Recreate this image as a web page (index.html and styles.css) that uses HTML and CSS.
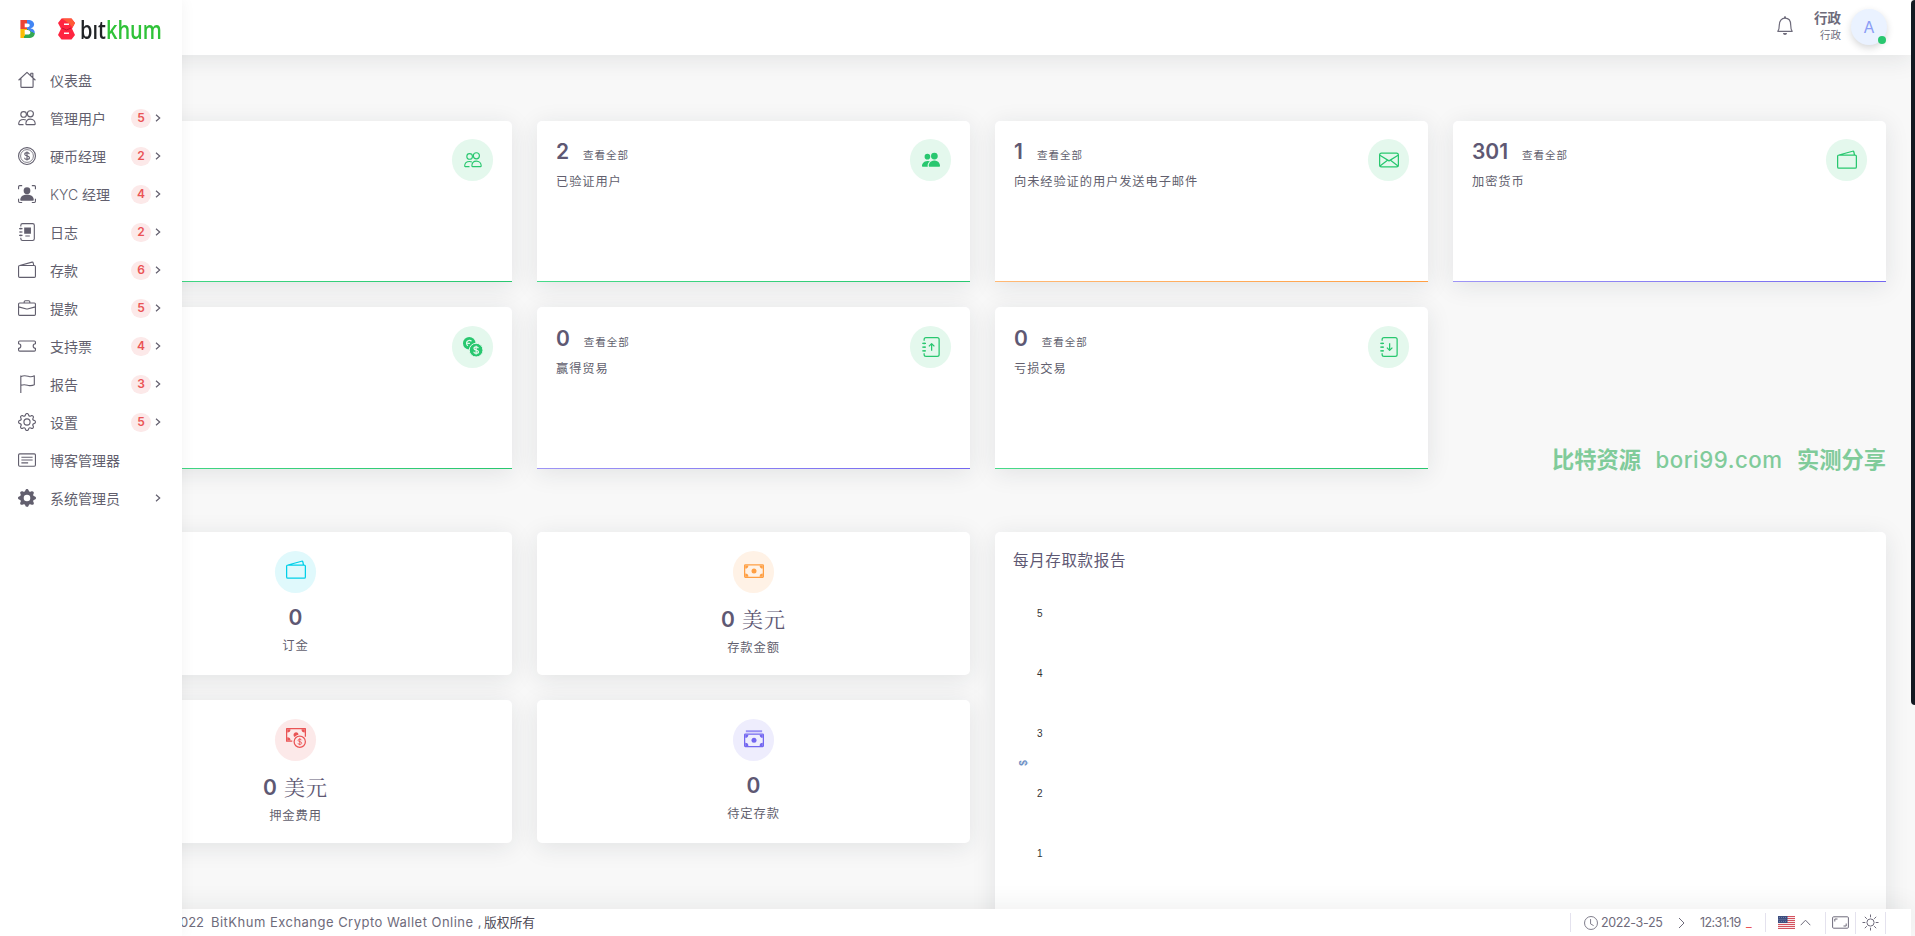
FILE: index.html
```
<!DOCTYPE html>
<html lang="zh-CN">
<head>
<meta charset="utf-8">
<title>BitKhum</title>
<link rel="stylesheet" href="styles.css">
</head>
<body>
<svg class="sprite" aria-hidden="true">
  <symbol id="house" viewBox="0 0 16 16"><path class="s" d="M.5 8.200 8 1.200l7.500 7M2.600 6.500v7.200c0 .6.300.9.900.9h9c.6 0 .9-.3.900-.9V6.500M11.400 4.200V2h1.800v4"/></symbol>
  <symbol id="people" viewBox="0 0 16 16"><circle class="s" cx="5" cy="4.800" r="2.500"/><circle class="s" cx="11" cy="4.300" r="2.700"/><path class="s" d="M7 13.400c0-2.600 1.600-4.400 4-4.400s4.300 1.800 4.300 4.400c0 .4-.2.500-.5.500H7.500c-.3 0-.5-.1-.5-.5zM4.900 13.900H1c-.3 0-.4-.2-.4-.5C.6 10.800 2.500 9.300 5 9.300c.8 0 1.400.1 2 .4"/></symbol>
  <symbol id="people-fill" viewBox="0 0 16 16"><circle cx="4.800" cy="5" r="2.500"/><circle cx="11" cy="4.500" r="3"/><path d="M7 14s-1 0-1-1 1-4.500 5-4.500 5 3.500 5 4.500-1 1-1 1zM5.200 14A2 2 0 0 1 5 13c0-1.400.7-2.900 2-3.900A6 6 0 0 0 5 8.800c-4 0-5 3.200-5 4.200s1 1 1 1z"/></symbol>
  <symbol id="coin" viewBox="0 0 16 16"><circle class="s" cx="8" cy="8" r="7.500"/><circle class="s thin" cx="8" cy="8" r="5.700"/><path class="s" d="M10.100 6.300C9.900 5.500 9.100 5 8 5s-2 .5-2 1.400C6 8.500 10.200 7.300 10.200 9.500c0 .9-.9 1.500-2.200 1.500s-2.100-.6-2.200-1.500M8 4v8"/></symbol>
  <symbol id="person-box" viewBox="0 0 16 16"><path class="s" d="M.5 3.700V1.500c0-.6.4-1 1-1h2.200M12.300.5h2.200c.6 0 1 .4 1 1v2.200M15.500 12.300v2.200c0 .6-.4 1-1 1h-2.200M3.700 15.500H1.500c-.6 0-1-.4-1-1v-2.200"/><circle cx="8" cy="5" r="3"/><path d="M3 14s-1 0-1-1 1-4.500 6-4.500 6 3.500 6 4.500-1 1-1 1z"/></symbol>
  <symbol id="journal" viewBox="0 0 16 16"><path class="s" d="M2.500 3V2c0-.9.6-1.500 1.500-1.500h9c.9 0 1.500.6 1.500 1.500v12c0 .9-.6 1.500-1.500 1.500H4c-.9 0-1.500-.6-1.500-1.500v-1M1 5h3M1 8h3M1 11h3M2.500 4.300v1.400M2.500 7.300v1.400M2.500 10.300v1.400"/></symbol>
  <symbol id="album" viewBox="0 0 16 16"><use href="#journal"/><path d="M5.500 4h6v5.500h-6zM6.500 11h4v1h-4z"/></symbol>
  <symbol id="journal-up" viewBox="0 0 16 16"><use href="#journal"/><path class="s" d="M8.500 11V5.300M6.300 7.500l2.200-2.200 2.200 2.200"/></symbol>
  <symbol id="journal-down" viewBox="0 0 16 16"><use href="#journal"/><path class="s" d="M8.500 5v5.700M6.300 8.500l2.200 2.200 2.200-2.200"/></symbol>
  <symbol id="wallet" viewBox="0 0 16 16"><path class="s" d="M1.500 4h13c.6 0 1 .4 1 1v8.500c0 .6-.4 1-1 1h-13c-.6 0-1-.4-1-1V5c0-.5.400-.9 1-1L12.500 1c.5-.1.900.2 1 .600L14 4"/></symbol>
  <symbol id="briefcase" viewBox="0 0 16 16"><path class="s" d="M1.500 3.500h13c.6 0 1 .4 1 1v9c0 .6-.4 1-1 1h-13c-.6 0-1-.4-1-1v-9c0-.6.400-1 1-1zM5.500 3.300V2.500c0-.6.400-1 1-1h3c.6 0 1 .400 1 1v.8M.5 7 7.600 8.900h.8L15.500 7"/></symbol>
  <symbol id="ticket" viewBox="0 0 16 16"><path class="s" d="M1.500 3.500h13c.6 0 1 .4 1 1V6a2 2 0 0 0 0 4v1.500c0 .6-.4 1-1 1h-13c-.6 0-1-.4-1-1V10a2 2 0 0 0 0-4V4.500c0-.6.400-1 1-1z"/></symbol>
  <symbol id="flag" viewBox="0 0 16 16"><path class="s" d="M2.500 16V.5M2.500 1.500C6-.3 8.500 1.200 10.500 1.500c1.500.2 2.800-.2 4-.8v8c-1.600.8-3 .9-4.500.7-2-.3-4-1.600-7.500-.2"/></symbol>
  <symbol id="gear" viewBox="0 0 16 16"><path d="M8 4.754a3.246 3.246 0 1 0 0 6.492 3.246 3.246 0 0 0 0-6.492zM5.754 8a2.246 2.246 0 1 1 4.492 0 2.246 2.246 0 0 1-4.492 0z"/><path d="M9.796 1.343c-.527-1.790-3.065-1.790-3.592 0l-.094.319a.873.873 0 0 1-1.255.52l-.292-.16c-1.640-.892-3.433.902-2.540 2.541l.159.292a.873.873 0 0 1-.52 1.255l-.319.094c-1.790.527-1.790 3.065 0 3.592l.319.094a.873.873 0 0 1 .52 1.255l-.16.292c-.892 1.640.901 3.434 2.541 2.540l.292-.159a.873.873 0 0 1 1.255.52l.094.319c.527 1.790 3.065 1.790 3.592 0l.094-.319a.873.873 0 0 1 1.255-.52l.292.16c1.640.893 3.434-.902 2.540-2.541l-.159-.292a.873.873 0 0 1 .52-1.255l.319-.094c1.790-.527 1.790-3.065 0-3.592l-.319-.094a.873.873 0 0 1-.52-1.255l.16-.292c.893-1.640-.902-3.433-2.541-2.540l-.292.159a.873.873 0 0 1-1.255-.52zm-2.633.283c.246-.835 1.428-.835 1.674 0l.094.319a1.873 1.873 0 0 0 2.693 1.115l.291-.16c.764-.415 1.600.42 1.184 1.185l-.159.292a1.873 1.873 0 0 0 1.116 2.692l.318.094c.835.246.835 1.428 0 1.674l-.319.094a1.873 1.873 0 0 0-1.115 2.693l.16.291c.415.764-.42 1.600-1.185 1.184l-.291-.159a1.873 1.873 0 0 0-2.693 1.116l-.094.318c-.246.835-1.428.835-1.674 0l-.094-.319a1.873 1.873 0 0 0-2.692-1.115l-.292.16c-.764.415-1.600-.42-1.184-1.185l.159-.291A1.873 1.873 0 0 0 1.945 8.930l-.319-.094c-.835-.246-.835-1.428 0-1.674l.319-.094A1.873 1.873 0 0 0 3.060 4.377l-.16-.292c-.415-.764.42-1.600 1.185-1.184l.292.159a1.873 1.873 0 0 0 2.692-1.115z"/></symbol>
  <symbol id="gear-fill" viewBox="0 0 16 16"><path d="M9.405 1.050c-.413-1.400-2.397-1.400-2.810 0l-.1.340a1.464 1.464 0 0 1-2.105.872l-.31-.17c-1.283-.698-2.686.705-1.987 1.987l.169.311c.446.82.023 1.841-.872 2.105l-.34.1c-1.400.413-1.400 2.397 0 2.810l.34.1a1.464 1.464 0 0 1 .872 2.105l-.17.31c-.698 1.283.705 2.686 1.987 1.987l.311-.169a1.464 1.464 0 0 1 2.105.872l.1.340c.413 1.400 2.397 1.400 2.810 0l.1-.34a1.464 1.464 0 0 1 2.105-.872l.31.17c1.283.698 2.686-.705 1.987-1.987l-.169-.311a1.464 1.464 0 0 1 .872-2.105l.34-.1c1.400-.413 1.400-2.397 0-2.810l-.34-.1a1.464 1.464 0 0 1-.872-2.105l.17-.31c.698-1.283-.705-2.686-1.987-1.987l-.311.169a1.464 1.464 0 0 1-2.105-.872zM8 10.930a2.929 2.929 0 1 1 0-5.860 2.929 2.929 0 0 1 0 5.858z"/></symbol>
  <symbol id="card-text" viewBox="0 0 16 16"><rect class="s" x=".5" y="2.500" width="15" height="11" rx="1"/><path class="s" d="M3 5.500h10M3 8h10M3 10.500h6"/></symbol>
  <symbol id="envelope" viewBox="0 0 16 16"><rect class="s" x=".5" y="2.500" width="15" height="11" rx="1.500"/><path class="s" d="M.7 4.200 8 8.700l7.300-4.500M.8 12.800l6-4.600M15.200 12.800l-6-4.600"/></symbol>
  <symbol id="exchange" viewBox="0 0 16 16"><circle cx="5" cy="5" r="5"/><path class="cut" d="M6.800 3.400A2.300 2.300 0 1 0 4 7M3.500 5h2"/><circle class="ring" cx="10.500" cy="10.500" r="5.500"/><path class="cut" d="M12.300 9c-.2-.7-.8-1.100-1.800-1.100s-1.700.5-1.700 1.200c0 1.800 3.600.9 3.600 2.700 0 .8-.8 1.300-1.900 1.300s-1.800-.5-1.900-1.300M10.500 7v7"/></symbol>
  <symbol id="cash" viewBox="0 0 16 16"><rect class="s" x=".5" y="3" width="15" height="10" rx=".6"/><circle cx="8" cy="8" r="2"/><path d="M1 3.500h2.500A2.500 2.500 0 0 1 1 6zM15 3.500h-2.500A2.500 2.500 0 0 0 15 6zM1 12.500h2.500A2.500 2.500 0 0 0 1 10zM15 12.500h-2.500A2.500 2.500 0 0 1 15 10z"/></symbol>
  <symbol id="cash-stack" viewBox="0 0 16 16"><path d="M1.500 1h13v1.600h-13z" opacity=".7"/><use href="#cash" y="1"/></symbol>
  <symbol id="cash-coin" viewBox="0 0 16 16"><path class="s" d="M5 10.500H.5v-10h15V7"/><path d="M1 1h2.600A2.600 2.600 0 0 1 1 3.600zM15 1h-2.600A2.600 2.600 0 0 0 15 3.600zM1 10h2.600A2.600 2.600 0 0 0 1 7.400zM10 5.300a2 2 0 1 0-3 1.900C7.800 6 8.800 5.500 10 5.300z"/><circle class="s" cx="11" cy="11" r="4.500"/><path class="s thin" d="M12.500 9.800c-.2-.6-.8-.9-1.500-.9s-1.400.3-1.400.9c0 1.500 3 .8 3 2.300 0 .7-.7 1-1.500 1s-1.500-.3-1.600-1M11 8.200v5.600"/></symbol>
  <symbol id="right" viewBox="0 0 6 8"><path class="bold" d="M1 .8 4.700 4 1 7.200"/></symbol>
</svg>

<div class="app">
  <header class="topbar">
    <svg class="bell" viewBox="0 0 16 19"><path class="s" d="M.8 15.300h14.400c-1-1.300-1.500-3.500-1.500-6.300C13.700 4.800 11.500 2.200 8 2.200S2.300 4.800 2.300 9c0 2.800-.5 5-1.500 6.300z"/><path d="M6 17h4c0 1.200-.9 2-2 2s-2-.8-2-2zM7 1.900C6.800.9 7.200.3 8 .3s1.200.6 1 1.600z"/></svg>
    <div class="who"><b>行政</b><span>行政</span></div>
    <div class="avatar">A<i></i></div>
  </header>

  <main class="content">
    <section class="stats">
      <article class="card stat green"><svg class="round"><use href="#people" x="12" y="12" width="18" height="18"/></svg></article>
      <article class="card stat green"><div><p class="num">2<a>查看全部</a></p><p class="label">已验证用户</p></div><svg class="round"><use href="#people-fill" x="12" y="12" width="18" height="18"/></svg></article>
      <article class="card stat orange"><div><p class="num">1<a>查看全部</a></p><p class="label">向未经验证的用户发送电子邮件</p></div><svg class="round"><use href="#envelope" x="11" y="11" width="20" height="20"/></svg></article>
      <article class="card stat violet"><div><p class="num">301<a>查看全部</a></p><p class="label">加密货币</p></div><svg class="round"><use href="#wallet" x="11" y="11" width="20" height="20"/></svg></article>
      <article class="card stat second green"><svg class="round"><use href="#exchange" x="11" y="11" width="20" height="20"/></svg></article>
      <article class="card stat second violet"><div><p class="num">0<a>查看全部</a></p><p class="label">赢得贸易</p></div><svg class="round"><use href="#journal-up" x="11" y="11" width="20" height="20"/></svg></article>
      <article class="card stat second green"><div><p class="num">0<a>查看全部</a></p><p class="label">亏损交易</p></div><svg class="round"><use href="#journal-down" x="11" y="11" width="20" height="20"/></svg></article>
      <p class="mark"><span>比特资源</span><span class="site">bori99.com</span><span>实测分享</span></p>
    </section>

    <section class="reports">
      <article class="card sum"><svg class="round cyan"><use href="#wallet" x="11" y="9" width="20" height="20"/></svg><p class="total">0</p><p class="label">订金</p></article>
      <article class="card sum"><svg class="round amber"><use href="#cash" x="11" y="10" width="20" height="20"/></svg><p class="total">0 <span>美元</span></p><p class="label">存款金额</p></article>
      <article class="card chart">
        <h2>每月存取款报告</h2>
        <div class="plot"><span class="unit">$</span><ol><li>5</li><li>4</li><li>3</li><li>2</li><li>1</li></ol></div>
      </article>
      <article class="card sum"><svg class="round red"><use href="#cash-coin" x="11" y="9" width="20" height="20"/></svg><p class="total">0 <span>美元</span></p><p class="label">押金费用</p></article>
      <article class="card sum"><svg class="round purple"><use href="#cash-stack" x="11" y="10" width="20" height="20"/></svg><p class="total">0</p><p class="label">待定存款</p></article>
    </section>
  </main>

  <footer class="bottom">
    <p class="copy"><span>2022</span><span class="name">BitKhum Exchange Crypto Wallet Online ,</span><span class="rights">版权所有</span></p>
    <div class="clock">
      <svg class="i14" viewBox="0 0 16 16"><circle class="s" cx="8" cy="8" r="7.400"/><path class="s" d="M7.500 3.500V9l3.500 2"/></svg>
      <span class="date">2022-3-25</span>
      <svg class="sep" viewBox="0 0 7 12"><path class="s" d="m1 1 5 5-5 5"/></svg>
      <span class="time">12:31:19</span><em>_</em>
    </div>
    <div class="lang">
      <svg class="us" viewBox="0 0 17 13"><path fill="#f8e9ea" d="M0 0h17v13H0z"/><path stroke="#d4525f" d="M0 .5h17M0 2.500h17M0 4.500h17M0 6.500h17M0 8.500h17M0 10.500h17M0 12.500h17"/><path fill="#3d4e80" d="M0 0h9.500v7H0z"/><path stroke="#8390b3" stroke-width=".7" stroke-dasharray="1 1" d="M1 1.500h8M.5 3.500h8M1 5.500h8"/></svg>
      <svg class="caret" viewBox="0 0 11 7"><path class="s" d="m.7 6.200 4.800-5 4.800 5"/></svg>
    </div>
    <div class="tool"><svg viewBox="0 0 17 13"><rect class="s" x=".6" y=".8" width="15.800" height="11.400" rx="1"/><path class="s" d="M2.800 5.500V3h2.700M14.200 7.500V10h-2.700"/></svg></div>
    <div class="tool"><svg viewBox="0 0 17 17"><circle class="s" cx="8.500" cy="8.500" r="3.600"/><path class="s" d="M8.500.5v2.800M8.500 13.700v2.800M.5 8.500h2.800M13.700 8.500h2.800M2.800 2.800l2 2M12.200 12.200l2 2M2.800 14.200l2-2M12.200 4.800l2-2"/></svg></div>
  </footer>
</div>

<aside class="side">
  <div class="brand">
    <span class="b">B</span>
    <svg class="logo" viewBox="0 0 20 24">
      <path fill="#ff2540" d="M4.500 1.500h10L18 6l-3 5.700 3 6.300-3.500 4.500h-10L1 18l3-6.300L1 6z"/>
      <path fill="#ff5a38" d="M5 1.500h9.500L18 6l-2.500 4.500L12 6.500z"/>
      <path fill="#fff" d="M7 6.500h5v1.600H7zM7 15.500h5v1.600H7z"/>
      <path fill="none" stroke="#c81230" d="m5 11 4.500 2 4.500-2"/>
    </svg>
    <span class="word">bıt<span>khum</span></span>
  </div>
  <nav>
    <a><svg class="ic"><use href="#house"/></svg>仪表盘</a>
    <a><svg class="ic"><use href="#people"/></svg>管理用户<b>5</b><svg class="go"><use href="#right"/></svg></a>
    <a><svg class="ic"><use href="#coin"/></svg>硬币经理<b>2</b><svg class="go"><use href="#right"/></svg></a>
    <a><svg class="ic"><use href="#person-box"/></svg><span class="kyc">KYC</span>经理<b>4</b><svg class="go"><use href="#right"/></svg></a>
    <a><svg class="ic"><use href="#album"/></svg>日志<b>2</b><svg class="go"><use href="#right"/></svg></a>
    <a><svg class="ic"><use href="#wallet"/></svg>存款<b>6</b><svg class="go"><use href="#right"/></svg></a>
    <a><svg class="ic"><use href="#briefcase"/></svg>提款<b>5</b><svg class="go"><use href="#right"/></svg></a>
    <a><svg class="ic"><use href="#ticket"/></svg>支持票<b>4</b><svg class="go"><use href="#right"/></svg></a>
    <a><svg class="ic"><use href="#flag"/></svg>报告<b>3</b><svg class="go"><use href="#right"/></svg></a>
    <a><svg class="ic"><use href="#gear"/></svg>设置<b>5</b><svg class="go"><use href="#right"/></svg></a>
    <a><svg class="ic"><use href="#card-text"/></svg>博客管理器</a>
    <a><svg class="ic"><use href="#gear-fill"/></svg>系统管理员<svg class="go"><use href="#right"/></svg></a>
  </nav>
</aside>
<div class="scroll"></div>
</body>
</html>
```

FILE: styles.css
```
* { box-sizing: border-box; }
body {
  margin: 0;
  height: 936px;
  position: relative;
  overflow: hidden;
  background: #f8f8f8;
  color: #625f6e;
  font-family: Inter, "Noto Sans CJK SC", sans-serif;
  font-size: 14px;
}
p, h2, ol { margin: 0; padding: 0; }
svg { display: block; fill: currentColor; flex: none; }
.sprite { position: absolute; width: 0; height: 0; }
.s { fill: none; stroke: currentColor; stroke-width: 1; stroke-linejoin: round; }
.thin { stroke-width: .7; }
.bold { fill: none; stroke: currentColor; stroke-width: 1.200; }
.cut { fill: none; stroke: #e4f8ed; stroke-width: 1; }
.ring { stroke: #e4f8ed; stroke-width: .8; }

.app { display: flex; flex-direction: column; height: 936px; }

.topbar {
  height: 55px;
  flex: none;
  width: 1911px;
  z-index: 1;
  display: flex;
  justify-content: flex-end;
  padding: 9px 24px 0 0;
  background: #fff;
  box-shadow: 0 4px 24px rgba(34, 41, 47, .1);
}
.bell { width: 16px; height: 19px; margin: 7px 21px 0 0; color: #6e6b7b; }
.bell .s { stroke-width: 1.2; }
.who { display: flex; flex-direction: column; align-items: flex-end; width: 27px; color: #6e6b7b; }
.who b { font-size: 13.500px; line-height: 18px; }
.who span { font-size: 10.500px; line-height: 17px; }
.avatar {
  position: relative;
  width: 36px;
  height: 36px;
  margin-left: 10px;
  border-radius: 50%;
  background: #eaf2ff;
  color: #8b9df5;
  font-size: 16px;
  line-height: 37px;
  text-align: center;
  box-shadow: 0 3px 7px rgba(34, 41, 47, .18);
}
.avatar i { position: absolute; right: 1px; bottom: 1px; width: 8px; height: 8px; border-radius: 50%; background: #28c76f; }

.content { flex: 1; min-height: 0; overflow: hidden; padding: 66px 29px 0 79px; }
.stats, .reports { display: grid; grid-template-columns: repeat(4, 433px); gap: 25px; }
.stats { grid-template-rows: 161px 162px; }
.reports { grid-auto-rows: 143px; margin-top: 63px; }
.card { background: #fff; border-radius: 5px; box-shadow: 0 4px 24px rgba(34, 41, 47, .1); }

.stat { display: flex; justify-content: space-between; padding: 18px 19px; border-bottom: 1px solid; border-radius: 5px 5px 0 0; }
.stat.second { padding-top: 19px; }
.stat > :only-child { margin-left: auto; }
.stat.green { border-image: linear-gradient(90deg, #48da89, #28c76f) 1; }
.stat.orange { border-image: linear-gradient(90deg, #ffb976, #ff9f43) 1; }
.stat.violet { border-image: linear-gradient(90deg, #9e95f5, #7367f0) 1; }
.round { width: 41.500px; height: 41.500px; border-radius: 50%; background: #e4f8ed; color: #28c76f; }
.cyan { background: #e0f9fc; color: #00cfe8; }
.amber { background: #fff2e6; color: #ff9f43; }
.red { background: #fce9e9; color: #ea5455; }
.purple { background: #eeedfd; color: #7367f0; }
.num { display: flex; align-items: baseline; font-size: 21px; line-height: 26px; height: 26px; font-weight: 600; color: #5e5873; }
.num a { margin-left: 14px; font-size: 10.500px; letter-spacing: 1px; font-weight: 400; color: #625f6e; }
.label { font-size: 12.250px; letter-spacing: .9px; line-height: 18px; }
.stat .label { margin-top: 8px; }
.mark { align-self: end; display: flex; justify-content: space-between; height: 24px; line-height: 24px; padding-left: 99px; margin-bottom: -3px; color: #80cb9a; font-size: 22.250px; font-weight: 700; }
.mark .site { font-weight: 500; letter-spacing: .5px; }

.sum { display: flex; flex-direction: column; align-items: center; padding-top: 19px; }
.total { margin-top: 11.500px; font-size: 21px; line-height: 28px; font-weight: 600; color: #5e5873; }
.total span { font-family: "Noto Serif CJK SC", "Noto Sans CJK SC", serif; font-weight: 400; letter-spacing: 1px; margin-left: 2px; }
.sum .label { margin-top: 5px; }
.chart { grid-column: 3 / 5; grid-row: 1 / 4; padding: 19px 18px; }
.chart h2 { font-size: 15.500px; letter-spacing: .650px; line-height: 20px; font-weight: 400; color: #5e5873; }
.plot { display: flex; align-items: center; margin-top: 13px; font: 10px "Liberation Sans", sans-serif; color: #333; }
.unit { width: 20px; height: 10px; line-height: 10px; transform: rotate(-90deg); text-align: center; color: #6d8fc4; font-weight: 700; margin: 58px 0 0 1px; }
.plot ol { list-style: none; margin-left: 3px; }
.plot li { height: 60px; line-height: 60px; }

.bottom {
  height: 27px;
  flex: none;
  width: 1911px;
  z-index: 1;
  display: flex;
  align-items: center;
  padding-right: 25px;
  background: #fff;
  box-shadow: 0 -4px 24px rgba(34, 41, 47, .07);
  color: #6e6b7b;
  font-size: 12.500px;
}
.copy { display: flex; align-items: baseline; margin-right: auto; padding-left: 172px; white-space: nowrap; font-size: 13px; line-height: 20px; }
.copy .name { margin-left: 7px; width: 273px; letter-spacing: .48px; }
.copy .rights { color: #4f4c59; font-size: 12.750px; }
.clock { display: flex; align-items: center; width: 195px; height: 19px; padding-left: 13px; border-left: 1px solid #e4e2ee; }
.i14 { width: 14px; height: 14px; }
.date { width: 62px; margin-left: 3px; white-space: nowrap; letter-spacing: -.35px; }
.sep { width: 7px; height: 12px; margin: 0 15px; }
.time { width: 43px; white-space: nowrap; letter-spacing: -.6px; }
.clock em { margin-left: 3px; color: #ea5455; font-style: normal; }
.lang { display: flex; align-items: center; width: 60px; height: 19px; padding-left: 12px; border-left: 1px solid #e4e2ee; }
.us { width: 17px; height: 13px; }
.caret { width: 11px; height: 7px; margin-left: 5px; }
.tool { display: flex; align-items: center; justify-content: center; width: 30px; height: 22px; border-left: 1px solid #e4e2ee; }
.tool:last-child { width: 31px; border-right: 1px solid #e4e2ee; }
.tool svg { width: 17px; }

.side { position: absolute; z-index: 2; left: 0; top: 0; width: 182px; height: 936px; background: #fff; box-shadow: 0 0 15px rgba(34, 41, 47, .05); }
.brand { display: flex; align-items: center; height: 57px; padding-left: 19px; }
.b {
  width: 39px;
  font-size: 25px;
  line-height: 26px;
  font-weight: 800;
  color: transparent;
  background: conic-gradient(from 0deg at 8px 13px, #4285f4 0 120deg, #34a853 120deg 200deg, #fbbc05 200deg 270deg, #ea4335 270deg);
  background-clip: text;
  -webkit-background-clip: text;
}
.logo { width: 20px; height: 24px; }
.word { margin-left: 3px; font: 600 25px/34px "Open Sans", sans-serif; color: #202326; white-space: nowrap; transform: scaleX(.8); transform-origin: 0 50%; }
.word span { color: #2fc238; }
.side nav { padding-top: 4px; }
.side a { display: flex; align-items: center; height: 38px; padding: 0 21px 0 18px; white-space: nowrap; }
.side .ic { width: 18px; height: 18px; margin-right: 14px; }
.kyc { width: 32px; font-weight: 300; }
.side a b { display: block; min-width: 20px; height: 19px; margin-left: auto; border-radius: 10px; background: #fce9e9; color: #ea5455; font-size: 12px; line-height: 18px; font-weight: 600; text-align: center; }
.go { width: 6px; height: 8px; margin-left: auto; }
.side b + .go { margin-left: 4px; }

.scroll { position: absolute; z-index: 3; top: 0; right: 0; width: 4px; height: 705px; border-radius: 4px 0 0 4px; background: #131a22; }
```
